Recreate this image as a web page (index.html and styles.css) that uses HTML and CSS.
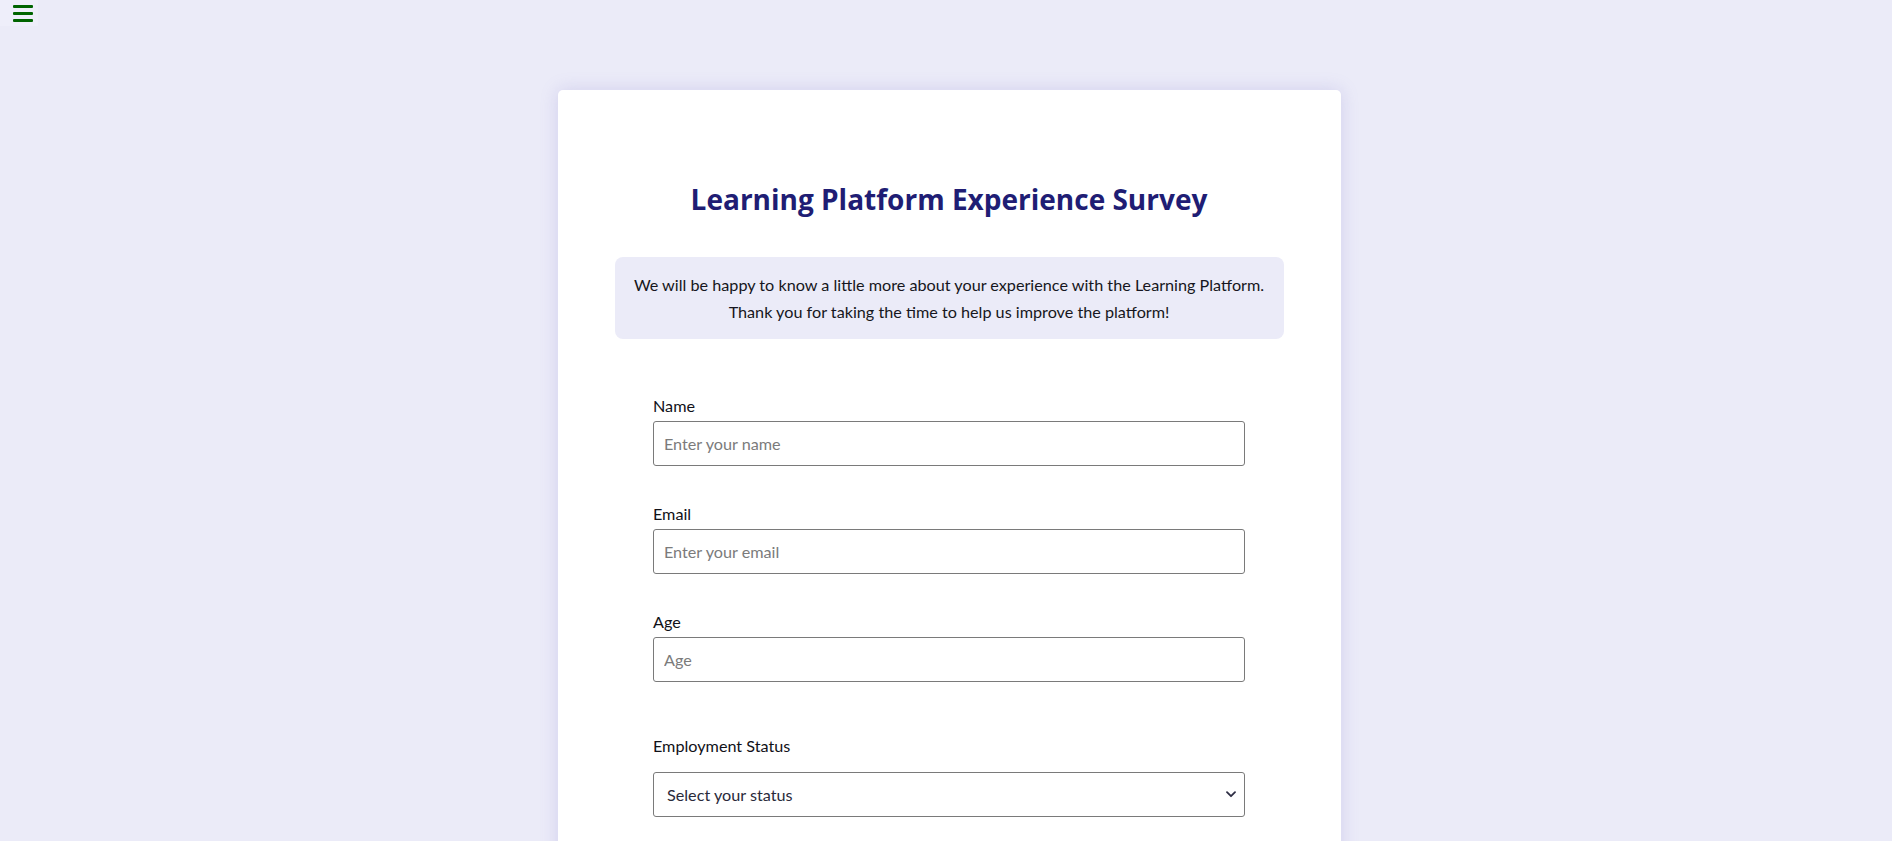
FILE: index.html
```html
<!DOCTYPE html>
<html lang="en">
<head>
<meta charset="utf-8">
<title>Learning Platform Experience Survey</title>
<link rel="stylesheet" href="styles.css">
</head>
<body>
<nav class="side-nav">
  <button class="menu-btn" aria-label="Menu">
    <span class="bar"></span><span class="bar"></span><span class="bar"></span>
  </button>
</nav>
<main class="page">
  <section class="card">
    <header class="card-header">
      <h1 class="title">Learning Platform Experience Survey</h1>
      <p class="intro">We will be happy to know a little more about your experience with the Learning Platform.<br>Thank you for taking the time to help us improve the platform!</p>
    </header>
    <form class="survey">
      <div class="field">
        <label class="label" for="name">Name</label>
        <input class="control" id="name" type="text" placeholder="Enter your name">
      </div>
      <div class="field">
        <label class="label" for="email">Email</label>
        <input class="control" id="email" type="email" placeholder="Enter your email">
      </div>
      <div class="field">
        <label class="label" for="age">Age</label>
        <input class="control" id="age" type="number" placeholder="Age">
      </div>
      <div class="field field-select">
        <label class="label" for="status">Employment Status</label>
        <div class="select-wrap">
          <select class="control select" id="status">
            <option>Select your status</option>
            <option>Student</option>
            <option>Full-time job</option>
            <option>Part-time job</option>
            <option>Unemployed</option>
          </select>
          <svg class="chevron" width="10" height="7" viewBox="0 0 10 7" aria-hidden="true"><path d="M1 1.2 L5 5.2 L9 1.2" fill="none" stroke="#2e2e44" stroke-width="1.8" stroke-linecap="round" stroke-linejoin="round"/></svg>
        </div>
      </div>
    </form>
  </section>
</main>
</body>
</html>
```
FILE: styles.css
```css
* { box-sizing: border-box; }

html, body {
  margin: 0;
  padding: 0;
  height: 100%;
  overflow: hidden;
}

body {
  background: #ebebf8;
  font-family: "Lato", "Roboto", "Liberation Sans", sans-serif;
  color: #161620;
  font-size: 16.2px;
}

.side-nav {
  position: fixed;
  top: 0;
  left: 0;
  width: 38px;
  height: 26px;
  background: #eeeefa;
}

.menu-btn {
  border: 0;
  background: transparent;
  padding: 5px 0 0 13px;
  margin: 0;
  display: flex;
  flex-direction: column;
  gap: 4px;
  cursor: pointer;
}

.bar {
  display: block;
  width: 20px;
  height: 3px;
  border-radius: 1px;
  background: #006400;
}

.page {
  padding-left: 6px;
  padding-top: 90px;
}

.card {
  width: 783px;
  margin: 0 auto;
  background: #ffffff;
  border-radius: 5px;
  box-shadow: 0 0 18px rgba(120, 110, 200, 0.22);
  padding: 90px 57px 60px;
  min-height: 900px;
}

.card-header {
  display: flex;
  flex-direction: column;
  gap: 39px;
}

.title {
  margin: 0;
  text-align: center;
  font-family: "Open Sans", "Roboto", sans-serif;
  font-size: 28px;
  line-height: 38px;
  font-weight: 700;
  color: #201d74;
}

.intro {
  margin: 0;
  background: #ebebf8;
  border-radius: 8px;
  padding: 14px 10px;
  text-align: center;
  font-size: 16.2px;
  line-height: 27px;
  color: #161620;
}

.survey {
  width: 592px;
  margin: 56px auto 0;
  display: flex;
  flex-direction: column;
  gap: 37px;
}

.field {
  display: flex;
  flex-direction: column;
  gap: 4px;
}

.field-select {
  margin-top: 16px;
  gap: 15px;
}

.label {
  font-size: 16.2px;
  line-height: 22px;
  color: #111118;
}

.control {
  width: 100%;
  height: 45px;
  border: 1px solid #7a7a7a;
  border-radius: 3px;
  padding: 0 10px;
  font-family: inherit;
  font-size: 16.2px;
  color: #222;
  background: #fff;
  outline: none;
}

.control::placeholder {
  color: #7b7b7b;
}

.select-wrap {
  position: relative;
}

.select {
  appearance: none;
  -webkit-appearance: none;
  padding-left: 13px;
  color: #2a2a3a;
}

.chevron {
  position: absolute;
  right: 9px;
  top: 19px;
  pointer-events: none;
}
```
